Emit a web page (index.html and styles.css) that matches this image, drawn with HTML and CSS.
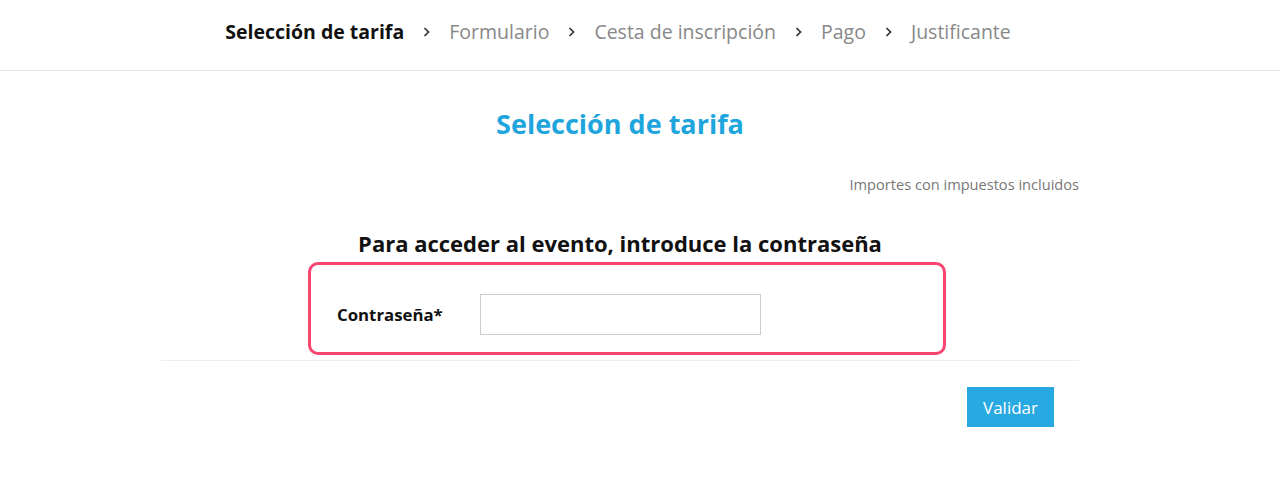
FILE: index.html
```html
<!DOCTYPE html>
<html lang="es">
<head>
    <meta charset="UTF-8">
    <meta name="viewport" content="width=device-width, initial-scale=1.0">
    <title>Selección de tarifa</title>
    <link rel="stylesheet" href="styles.css">
</head>
<body>
    <header class="steps">
        <nav class="steps-list">
            <span class="step active">Selección de tarifa</span>
            <svg class="sep" width="9" height="12" viewBox="0 0 9 12"><path d="M2.5 2 L6.5 6 L2.5 10" fill="none" stroke="#333" stroke-width="1.7"/></svg>
            <span class="step">Formulario</span>
            <svg class="sep" width="9" height="12" viewBox="0 0 9 12"><path d="M2.5 2 L6.5 6 L2.5 10" fill="none" stroke="#333" stroke-width="1.7"/></svg>
            <span class="step">Cesta de inscripción</span>
            <svg class="sep" width="9" height="12" viewBox="0 0 9 12"><path d="M2.5 2 L6.5 6 L2.5 10" fill="none" stroke="#333" stroke-width="1.7"/></svg>
            <span class="step">Pago</span>
            <svg class="sep" width="9" height="12" viewBox="0 0 9 12"><path d="M2.5 2 L6.5 6 L2.5 10" fill="none" stroke="#333" stroke-width="1.7"/></svg>
            <span class="step">Justificante</span>
        </nav>
    </header>

    <main class="container">
        <h1 class="page-title">Selección de tarifa</h1>
        <p class="tax-note">Importes con impuestos incluidos</p>

        <form class="password-form">
            <h2 class="form-title">Para acceder al evento, introduce la contraseña</h2>
            <div class="password-box">
                <label for="password">Contraseña*</label>
                <input type="password" id="password" name="password">
            </div>
            <div class="actions">
                <button type="button">Validar</button>
            </div>
        </form>
    </main>
</body>
</html>
```

FILE: styles.css
```css
body {
    font-family: "Open Sans", Arial, sans-serif;
    color: #222;
    margin: 0;
    padding: 0 40px 0 0;
    background-color: #fff;
}
.steps {
    height: 70px;
    border-bottom: 1px solid #e8e8e8;
    margin-right: -40px;
    padding-right: 44px;
}
.steps-list {
    display: flex;
    align-items: center;
    justify-content: center;
    gap: 18px;
    height: 63px;
    font-size: 19.5px;
}
.step {
    color: #888;
}
.step.active {
    color: #111;
    font-weight: 700;
}
.sep {
    margin-top: 1px;
}
.container {
    width: 918px;
    margin: 0 auto;
}
.page-title {
    margin: 36px 0 0;
    text-align: center;
    color: #1fa5de;
    font-size: 27px;
    font-weight: 700;
    line-height: 34px;
}
.tax-note {
    margin: 33px 0 0;
    text-align: right;
    color: #777;
    font-size: 14.6px;
    line-height: 20px;
}
.form-title {
    margin: 34px 0 0;
    text-align: center;
    font-size: 22px;
    font-weight: 700;
    line-height: 30px;
    color: #111;
}
.password-box {
    display: flex;
    align-items: center;
    width: 632px;
    height: 72px;
    margin: 4px 0 0 147px;
    padding: 13px 0 2px;
    border: 3px solid #fb4571;
    border-radius: 10px;
}
.password-box label {
    width: 143px;
    padding-left: 26px;
    font-size: 16.8px;
    font-weight: 700;
    color: #111;
}
.password-box input {
    width: 281px;
    height: 41px;
    padding: 0 8px;
    box-sizing: border-box;
    border: 1px solid #ccc;
}
.actions {
    margin-top: 5px;
    border-top: 1px solid #eee;
    padding: 26px 25px 0 0;
    text-align: right;
}
.actions button {
    padding: 0 16px;
    height: 40px;
    background-color: #29a9e1;
    color: #fff;
    border: none;
    font-family: inherit;
    font-size: 17px;
    cursor: pointer;
}
.actions button:hover {
    background-color: #1a8fc2;
}
```
